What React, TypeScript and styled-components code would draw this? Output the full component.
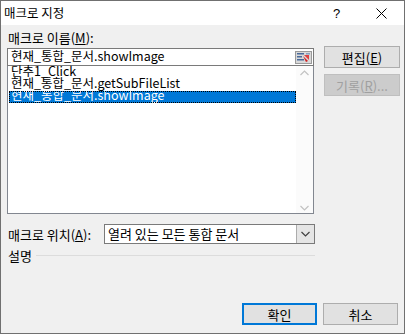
import React from 'react'
import styled, { createGlobalStyle } from 'styled-components'

const GlobalStyle = createGlobalStyle`
  html, body {
    margin: 0;
    padding: 0;
    background: #ffffff;
  }
  body {
    font-family: "Noto Sans CJK KR", "Noto Sans", sans-serif;
    font-size: 13px;
    color: #000000;
  }
`

const Window = styled.div`
  box-sizing: border-box;
  width: 405px;
  height: 334px;
  border: 1px solid #707070;
  background: #f0f0f0;
  display: flex;
  flex-direction: column;
  overflow: hidden;
`

const TitleBar = styled.div`
  height: 24px;
  background: #ffffff;
  display: flex;
  align-items: center;
  padding-left: 3px;
`

const TitleText = styled.div`
  flex: 1;
  font-size: 12.5px;
  line-height: 16px;
`

const CaptionButton = styled.div`
  width: 45px;
  height: 24px;
  display: flex;
  align-items: center;
  justify-content: center;
  font-family: "Liberation Sans", sans-serif;
  font-size: 13px;
`

const Body = styled.div`
  flex: 1;
  display: flex;
  flex-direction: column;
  padding: 0 6px 8px 6px;
`

const FieldLabel = styled.div`
  line-height: 16px;
  margin-top: 5px;
  padding-left: 1px;
`

const MainRow = styled.div`
  display: grid;
  grid-template-columns: 307px 76px;
  column-gap: 10px;
`

const LeftCol = styled.div`
  display: flex;
  flex-direction: column;
  padding-top: 2px;
`

const NameInput = styled.div`
  box-sizing: border-box;
  height: 18px;
  border: 1px solid #7a7a7a;
  background: #ffffff;
  display: flex;
  align-items: center;
  padding: 0 0 2px 3px;
  font-size: 12.5px;
  line-height: 12px;
`

const InputText = styled.span`
  flex: 1;
`

const RefButton = styled.div`
  width: 17px;
  height: 14px;
  display: flex;
  align-items: center;
  justify-content: center;
  margin: 2px 1px 0 0;
`

const MacroList = styled.div`
  box-sizing: border-box;
  height: 148px;
  border: 1px solid #828790;
  border-top: none;
  background: #ffffff;
  display: grid;
  grid-template-columns: 1fr 17px;
`

const ListItems = styled.div`
  padding: 1px 0 0 1px;
`

const ListItem = styled.div<{ selected?: boolean }>`
  box-sizing: border-box;
  height: 12px;
  font-size: 12.5px;
  line-height: 8px;
  padding-left: 2px;
  white-space: nowrap;
  background: ${({ selected }) => (selected ? '#0078d7' : 'transparent')};
  color: ${({ selected }) => (selected ? '#ffffff' : '#000000')};
  outline: ${({ selected }) => (selected ? '1px dotted #000000' : 'none')};
  outline-offset: -1px;
`

const ScrollTrack = styled.div`
  background: #fbfbfb;
  display: flex;
  flex-direction: column;
  justify-content: space-between;
  align-items: center;
  padding: 4px 0 2px 0;
`

const SideCol = styled.div`
  display: flex;
  flex-direction: column;
  gap: 6px;
`

const PushButton = styled.div<{ disabled?: boolean; isDefault?: boolean }>`
  box-sizing: border-box;
  height: 22px;
  display: flex;
  align-items: center;
  justify-content: center;
  background: ${({ disabled }) => (disabled ? '#cccccc' : '#e1e1e1')};
  border: 1px solid ${({ disabled, isDefault }) => (isDefault ? '#0078d7' : disabled ? '#bfbfbf' : '#adadad')};
  box-shadow: ${({ isDefault }) => (isDefault ? 'inset 0 0 0 1px #0078d7' : 'none')};
  color: ${({ disabled }) => (disabled ? '#a0a0a0' : '#000000')};
`

const LocationRow = styled.div`
  display: flex;
  align-items: center;
  margin-top: 10px;
`

const LocationLabel = styled.div`
  width: 96px;
  padding-left: 1px;
`

const Combo = styled.div`
  box-sizing: border-box;
  width: 211px;
  height: 20px;
  border: 1px solid #7a7a7a;
  background: #ffffff;
  display: flex;
  align-items: stretch;
`

const ComboText = styled.div`
  flex: 1;
  padding-left: 3px;
  line-height: 18px;
`

const ComboButton = styled.div`
  width: 17px;
  background: #e5e5e5;
  border-left: 1px solid #acacac;
  display: flex;
  align-items: center;
  justify-content: center;
`

const DescRow = styled.div`
  display: flex;
  align-items: center;
  gap: 4px;
  margin-top: 2px;
  width: 307px;
  padding-left: 1px;
`

const DescLine = styled.div`
  flex: 1;
  height: 1px;
  background: #dcdcdc;
`

const Footer = styled.div`
  margin-top: auto;
  display: flex;
  justify-content: flex-end;
  gap: 6px;
`

const FooterButton = styled(PushButton)`
  width: 75px;
`

const Chevron = ({ up, color }: { up?: boolean; color: string }) => (
  <svg width="9" height="6" viewBox="0 0 9 6">
    <path d={up ? 'M0.5 5 L4.5 1 L8.5 5' : 'M0.5 1 L4.5 5 L8.5 1'} fill="none" stroke={color} strokeWidth="1.2" />
  </svg>
)

const RefIcon = () => (
  <svg width="17" height="13" viewBox="0 0 17 13">
    <rect x="0.5" y="0.5" width="16" height="12" fill="#d9d9d9" stroke="#9a9a9a" />
    <rect x="2" y="2" width="7" height="1.5" fill="#4a6a9a" />
    <rect x="2" y="5" width="5" height="1.5" fill="#4a6a9a" />
    <rect x="2" y="8" width="7" height="1.5" fill="#4a6a9a" />
    <rect x="11" y="2" width="4" height="1.5" fill="#8aa0c0" />
    <path d="M8 5 L13 10 L11 11 Z" fill="#d02020" />
    <path d="M9 4 L14 4 L14 9 Z" fill="#e04040" />
  </svg>
)

const CloseIcon = () => (
  <svg width="11" height="11" viewBox="0 0 11 11">
    <path d="M0.5 0.5 L10.5 10.5 M10.5 0.5 L0.5 10.5" stroke="#000000" strokeWidth="1" />
  </svg>
)

export default function App() {
  const macros = ['단추1_Click', '현재_통합_문서.getSubFileList', '현재_통합_문서.showImage']
  const selected = 2

  return (
    <>
      <GlobalStyle />
      <Window>
        <TitleBar>
          <TitleText>매크로 지정</TitleText>
          <CaptionButton>?</CaptionButton>
          <CaptionButton>
            <CloseIcon />
          </CaptionButton>
        </TitleBar>
        <Body>
          <FieldLabel>
            매크로 이름(<u>M</u>):
          </FieldLabel>
          <MainRow>
            <LeftCol>
              <NameInput>
                <InputText>현재_통합_문서.showImage</InputText>
                <RefButton>
                  <RefIcon />
                </RefButton>
              </NameInput>
              <MacroList>
                <ListItems>
                  {macros.map((m, i) => (
                    <ListItem key={m} selected={i === selected}>
                      {m}
                    </ListItem>
                  ))}
                </ListItems>
                <ScrollTrack>
                  <Chevron up color="#c2c2c2" />
                  <Chevron color="#c2c2c2" />
                </ScrollTrack>
              </MacroList>
            </LeftCol>
            <SideCol>
              <PushButton>
                편집(<u>E</u>)
              </PushButton>
              <PushButton disabled>
                기록(<u>R</u>)...
              </PushButton>
            </SideCol>
          </MainRow>
          <LocationRow>
            <LocationLabel>
              매크로 위치(<u>A</u>):
            </LocationLabel>
            <Combo>
              <ComboText>열려 있는 모든 통합 문서</ComboText>
              <ComboButton>
                <Chevron color="#404040" />
              </ComboButton>
            </Combo>
          </LocationRow>
          <DescRow>
            <span>설명</span>
            <DescLine />
          </DescRow>
          <Footer>
            <FooterButton isDefault>확인</FooterButton>
            <FooterButton>취소</FooterButton>
          </Footer>
        </Body>
      </Window>
    </>
  )
}
